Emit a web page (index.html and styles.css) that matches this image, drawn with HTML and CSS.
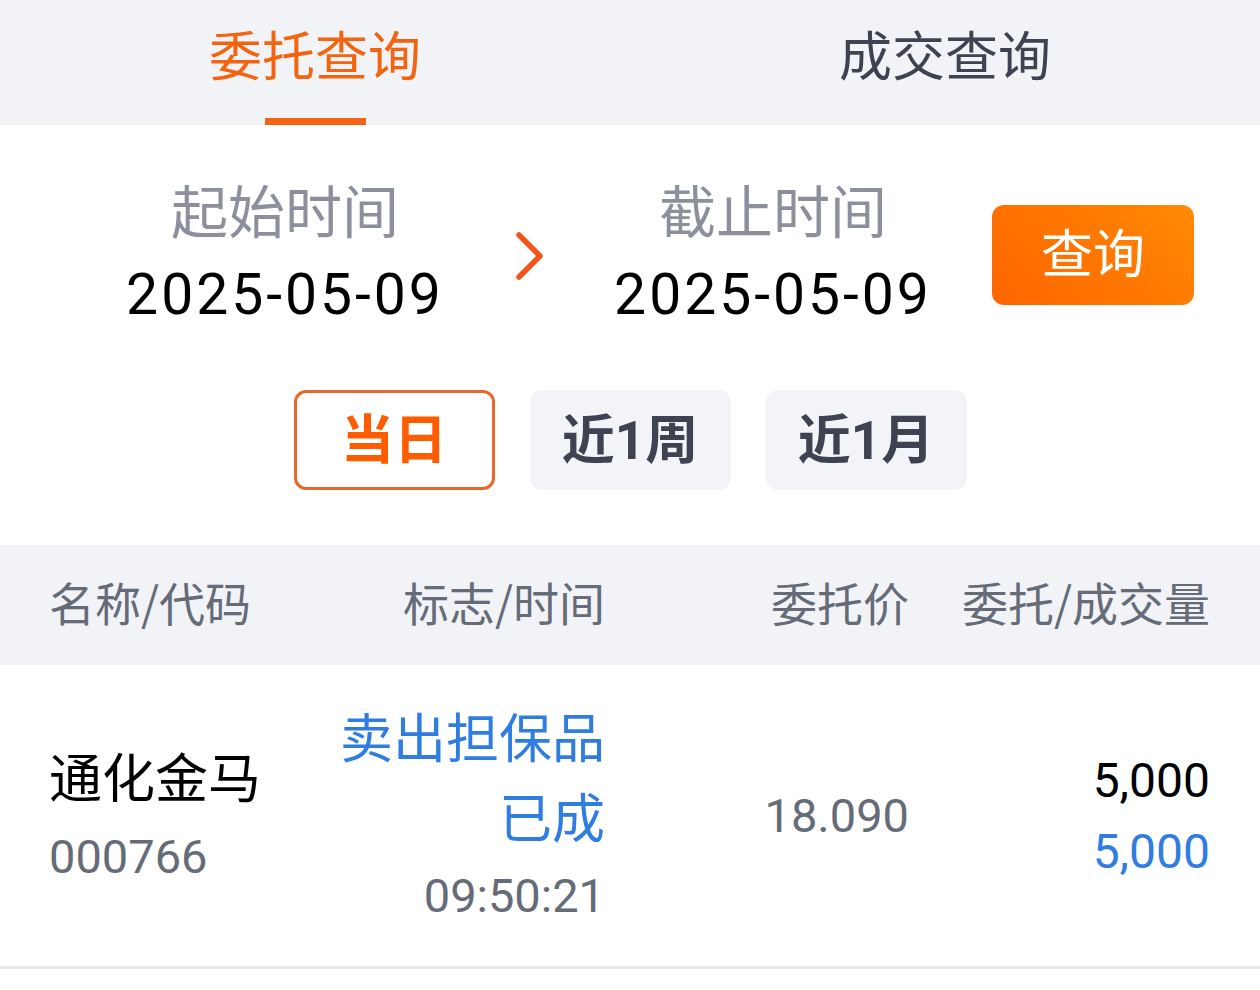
FILE: index.html
```html
<!DOCTYPE html>
<html lang="zh-CN">
<head>
<meta charset="utf-8">
<title>委托查询</title>
<link rel="stylesheet" href="styles.css">
</head>
<body>
<div class="page">
  <div class="tabs">
    <div class="tab active"><span class="tab-label">委托查询</span><span class="tab-bar"></span></div>
    <div class="tab"><span class="tab-label">成交查询</span><span class="tab-bar"></span></div>
  </div>

  <div class="filter">
    <div class="range">
      <div class="date-col">
        <div class="date-label">起始时间</div>
        <div class="date-value">2025-05-09</div>
      </div>
      <div class="arrow-col">
        <svg class="arrow" width="30" height="50" viewBox="0 0 30 50"><path d="M4 4 L25 25 L4 46" fill="none" stroke="#f4541b" stroke-width="5.5" stroke-linecap="round" stroke-linejoin="round"/></svg>
      </div>
      <div class="date-col">
        <div class="date-label">截止时间</div>
        <div class="date-value">2025-05-09</div>
      </div>
      <button class="query-btn">查询</button>
    </div>
    <div class="quick">
      <div class="chip chip-active">当日</div>
      <div class="chip">近1周</div>
      <div class="chip">近1月</div>
    </div>
  </div>

  <div class="table-head grid">
    <div class="c1">名称/代码</div>
    <div class="c2">标志/时间</div>
    <div class="c3">委托价</div>
    <div class="c4">委托/成交量</div>
  </div>

  <div class="row grid">
    <div class="c1 stack name-stack">
      <div class="name">通化金马</div>
      <div class="code">000766</div>
    </div>
    <div class="c2 stack mid-stack">
      <div class="blue big">卖出担保品</div>
      <div class="blue big">已成</div>
      <div class="time">09:50:21</div>
    </div>
    <div class="c3 price">18.090</div>
    <div class="c4 stack qty-stack">
      <div class="qty">5,000</div>
      <div class="qty blue">5,000</div>
    </div>
  </div>
</div>
</body>
</html>
```

FILE: styles.css
```css
* { box-sizing: border-box; }
html, body { margin: 0; padding: 0; background: #ffffff; }
body {
  font-family: Roboto, "Noto Sans CJK SC", sans-serif;
  color: #000;
}
.page { width: 1260px; }

.tabs {
  display: flex;
  height: 125px;
  background: #f2f3f7;
}
.tab {
  flex: 1;
  display: flex;
  flex-direction: column;
  align-items: center;
}
.tab-label {
  font-family: "Noto Sans CJK SC", sans-serif;
  font-size: 53px;
  line-height: 106px;
  color: #3d4350;
}
.tab-bar {
  margin-top: 12px;
  width: 101px;
  height: 7px;
  background: transparent;
}
.tab.active .tab-label { color: #f2640f; }
.tab.active .tab-bar { background: #f26412; }

.filter {
  padding: 47px 0 55px;
}
.range {
  display: flex;
  align-items: flex-start;
  padding-left: 120px;
}
.date-col {
  width: 330px;
  text-align: center;
}
.date-col + .arrow-col + .date-col { width: 326px; }
.date-label {
  font-family: "Noto Sans CJK SC", sans-serif;
  font-size: 57px;
  line-height: 72px;
  color: #8b909c;
}
.date-value {
  font-size: 57px;
  line-height: 102px;
  letter-spacing: 3px;
  color: #000;
}
.arrow-col {
  width: 160px;
  display: flex;
  justify-content: center;
  padding-top: 59px;
}
.arrow { display: block; }
.query-btn {
  margin-left: 56px;
  margin-top: 33px;
  width: 202px;
  height: 100px;
  border: none;
  border-radius: 12px;
  background: linear-gradient(45deg, #ff6400 0%, #ff7800 55%, #ff8a05 100%);
  color: #fff;
  font-family: "Noto Sans CJK SC", sans-serif;
  font-size: 52px;
  padding: 0 0 9px;
  line-height: 91px;
}

.quick {
  display: flex;
  justify-content: center;
  gap: 35px;
  margin-top: 44px;
}
.chip {
  width: 201px;
  height: 100px;
  border-radius: 12px;
  background: #f3f4f7;
  color: #3d4350;
  font-family: Roboto, "Noto Sans CJK SC", sans-serif;
  font-weight: 700;
  font-size: 53px;
  padding-bottom: 9px;
  display: flex;
  align-items: center;
  justify-content: center;
}
.chip-active {
  background: #fff;
  border: 3px solid #e8672a;
  color: #ff5c00;
}

.grid {
  display: grid;
  grid-template-columns: 283px 273px 304px 301px;
  padding: 0 50px 0 49px;
}
.c1 { text-align: left; }
.c2, .c3, .c4 { text-align: right; }

.table-head {
  height: 120px;
  background: #f2f3f7;
  align-items: center;
  font-size: 46px;
  color: #656b77;
  font-family: "Noto Sans CJK SC", sans-serif;
  padding-bottom: 8px;
}

.row {
  height: 304px;
  border-bottom: 3px solid #e6e8ec;
  align-items: center;
}
.stack { display: flex; flex-direction: column; }
.c2.stack, .c4.stack { align-items: flex-end; }
.name {
  font-family: "Noto Sans CJK SC", sans-serif;
  font-size: 53px;
  line-height: 82px;
  color: #000;
}
.code {
  font-size: 47px;
  line-height: 82px;
  color: #656b77;
}
.blue { color: #2f7de1; }
.big {
  font-family: "Noto Sans CJK SC", sans-serif;
  font-size: 53px;
  line-height: 80px;
}
.time {
  font-size: 47px;
  line-height: 82px;
  color: #656b77;
}
.price {
  font-size: 47px;
  color: #656b77;
}
.qty {
  font-size: 48px;
  line-height: 71px;
  color: #000;
}
.qty.blue { color: #2f7de1; }
```
